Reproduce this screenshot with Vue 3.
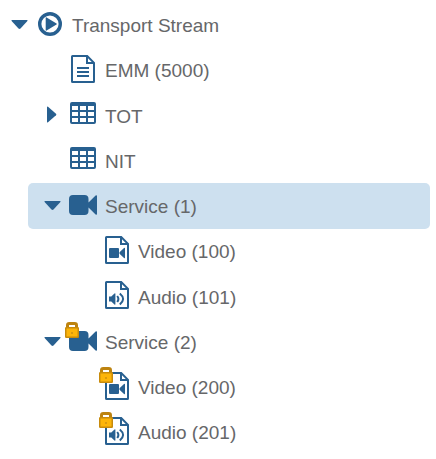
<script setup>
const rows = [
  { label: 'Transport Stream', level: 0, icon: 'play', caret: 'down' },
  { label: 'EMM (5000)', level: 1, icon: 'text' },
  { label: 'TOT', level: 1, icon: 'table', caret: 'right' },
  { label: 'NIT', level: 1, icon: 'table' },
  { label: 'Service (1)', level: 1, icon: 'camera', caret: 'down', selected: true },
  { label: 'Video (100)', level: 2, icon: 'video' },
  { label: 'Audio (101)', level: 2, icon: 'audio' },
  { label: 'Service (2)', level: 1, icon: 'camera', caret: 'down', locked: true },
  { label: 'Video (200)', level: 2, icon: 'video', locked: true },
  { label: 'Audio (201)', level: 2, icon: 'audio', locked: true },
]
const isFile = (icon) => ['text', 'video', 'audio'].includes(icon)
</script>

<template>
  <ul class="tree" role="tree">
    <li
      v-for="row in rows"
      :key="row.label"
      class="row"
      :class="['level-' + row.level, { selected: row.selected }]"
      role="treeitem"
    >
      <span class="caret">
        <svg v-if="row.caret === 'down'" class="down" width="17" height="9" viewBox="0 0 17 9">
          <path d="M1 0h15q1 0 .4 1L9.500 8.500q-1 .9-2 0L.6 1Q0 0 1 0Z" />
        </svg>
        <svg v-else-if="row.caret === 'right'" class="right" width="10" height="17" viewBox="0 0 10 17">
          <path d="M0 1Q0 .2 1 .8l8 6.900q.8.8 0 1.600L1 16.200Q0 16.800 0 16Z" />
        </svg>
      </span>
      <span class="icon">
        <svg v-if="row.icon === 'play'" class="play" width="24" height="24" viewBox="0 0 24 24">
          <circle cx="12" cy="12" r="10.3" fill="none" stroke="currentColor" stroke-width="3.4" />
          <path d="M7.700 6q0-1 .9-.5l9.900 5.900q.8.600 0 1.200l-9.900 5.900q-.9.500-.9-.5Z" />
        </svg>
        <svg v-else-if="isFile(row.icon)" class="file" width="24" height="28" viewBox="0 0 24 28">
          <path
            d="M1 1.500Q1 1 1.500 1H16.200L23 7.800V26.500Q23 27 22.500 27H1.500Q1 27 1 26.500ZM16 1V8H23"
            fill="none" stroke="currentColor" stroke-width="2"
          />
          <path v-if="row.icon === 'text'" d="M6 12h12v2H6ZM6 16h12v2H6ZM6 20h12v2H6Z" />
          <path v-else-if="row.icon === 'video'" d="M5 12h8q1 0 1 1v8q0 1-1 1h-8Q4 22 4 21v-8Q4 12 5 12ZM14.500 16.200l4.500-4.200q1-.6 1 .4v9.200q0 1-1 .4L14.500 17.800Z" />
          <g v-else>
            <path d="M4 15.500h2.300l3.200-3q.9-.7.900.4v10.200q0 1.100-.9.400l-3.200-3H4Z" />
            <path d="M12.200 15q2.400 3 0 6M14.800 12.500q6.600 5.500 0 11" fill="none" stroke="currentColor" stroke-width="2" />
          </g>
        </svg>
        <svg v-else-if="row.icon === 'table'" class="table" width="26" height="22" viewBox="0 0 26 22">
          <path
            fill-rule="evenodd"
            d="M2 0H24Q26 0 26 2V20Q26 22 24 22H2Q0 22 0 20V2Q0 0 2 0ZM2 4V8H8V4ZM10 4V8H16V4ZM18 4V8H24V4ZM2 10V14H8V10ZM10 10V14H16V10ZM18 10V14H24V10ZM2 16V20H8V16ZM10 16V20H16V16ZM18 16V20H24V16Z"
          />
        </svg>
        <svg v-else class="camera" width="28" height="20" viewBox="0 0 28 20">
          <path d="M4 0H15.500Q19.500 0 19.500 4V16Q19.500 20 15.500 20H4Q0 20 0 16V4Q0 0 4 0ZM19 8L26.600.500Q28-.3 28 1.300V18.700Q28 20.300 26.600 19.500L19 12Z" />
        </svg>
        <svg v-if="row.locked" class="lock" width="14" height="16" viewBox="0 0 14 16">
          <path d="M2.500 6V3.200Q2.500 1.500 4.200 1.500h5.600Q11.500 1.500 11.500 3.200V6" fill="none" stroke="#bd830f" stroke-width="3" />
          <rect x=".75" y="5.750" width="12.500" height="9.500" rx=".5" fill="#fdb50a" stroke="#c88b0c" stroke-width="1.500" />
          <rect x="6" y="10" width="2" height="2" fill="#d99a10" />
        </svg>
      </span>
      <span class="label">{{ row.label }}</span>
    </li>
  </ul>
</template>

<style>
body {
  background: #fff;
  overflow: hidden;
}
</style>

<style scoped>
.tree {
  list-style: none;
  margin: 0;
  padding: 2px 6px 0 0;
  font-family: "Liberation Sans", Arial, sans-serif;
  font-size: 19px;
  color: #666769;
}
.row {
  display: flex;
  height: 45.25px;
  border-radius: 5px;
}
.level-0 { margin-left: -5px; }
.level-1 { margin-left: 28px; }
.level-2 { margin-left: 61px; }
.selected {
  height: 46px;
  margin-bottom: -0.75px;
  background: #cde0ef;
}
.caret,
.icon {
  display: flex;
  justify-content: center;
  align-items: flex-start;
  flex: none;
  color: #286090;
}
.caret {
  width: 28px;
  padding-left: 10px;
}
.icon {
  position: relative;
  width: 34px;
}
svg {
  display: block;
  fill: currentColor;
}
.down { margin-top: 18px; }
.right { margin-top: 13px; }
.play { margin-top: 10px; }
.file { margin-top: 7.750px; }
.table { margin-top: 9.500px; }
.camera { margin-top: 12px; }
.level-2 .file { margin-left: 2px; }
.lock {
  position: absolute;
  left: -1px;
  top: 3px;
}
.level-2 .lock { left: 0; }
.label {
  line-height: 48px;
  padding-left: 5px;
  white-space: nowrap;
}
</style>
